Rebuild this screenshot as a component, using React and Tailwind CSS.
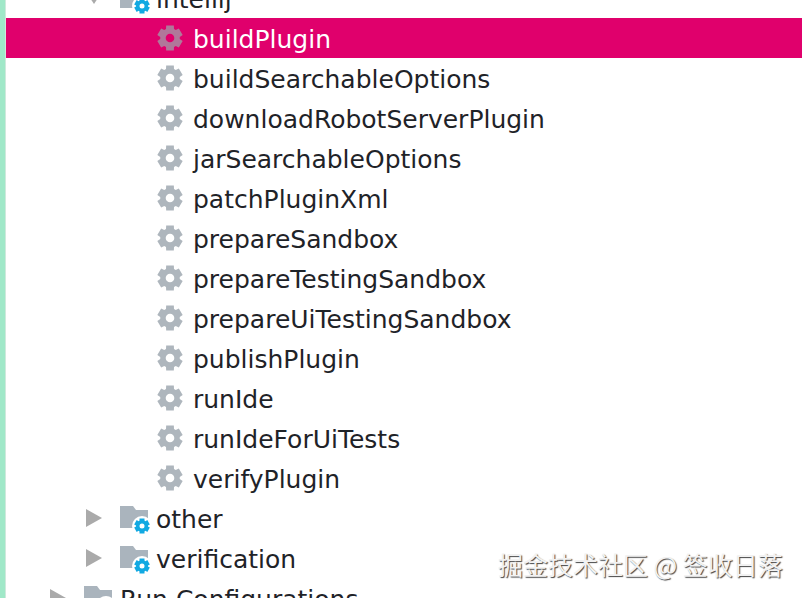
const tasks = ["buildPlugin","buildSearchableOptions","downloadRobotServerPlugin","jarSearchableOptions","patchPluginXml","prepareSandbox","prepareTestingSandbox","prepareUiTestingSandbox","publishPlugin","runIde","runIdeForUiTests","verifyPlugin"];

function gearPath(cx, cy, outer, root, toothHalf, baseHalf) {
  const pts = [];
  for (let i = 0; i < 6; i++) {
    const a = (i * Math.PI) / 3 - Math.PI / 2;
    const p = (r, t) => `${(cx + r * Math.cos(a + t)).toFixed(2)} ${(cy + r * Math.sin(a + t)).toFixed(2)}`;
    pts.push(p(root, -baseHalf), p(outer, -toothHalf), p(outer, toothHalf), p(root, baseHalf));
  }
  return "M" + pts.join("L") + "Z";
}

function Gear({ color = "#aeb6bd", hole = "#fff" }) {
  return (
    <svg width="26" height="26" viewBox="0 0 26 26" className="shrink-0">
      <path fill={color} d={gearPath(13, 13, 13, 9.8, 0.3, 0.42)} />
      <circle cx="13" cy="13" r="4.3" fill={hole} />
    </svg>
  );
}

function Folder() {
  return (
    <span className="relative block h-[24px] w-[30px] shrink-0">
      <svg width="28" height="22" viewBox="0 0 28 22" className="absolute left-0 top-0">
        <path fill="#aab4bd" d="M0 0h13l3 4h12v18H0z" />
      </svg>
      <svg width="20" height="20" viewBox="0 0 20 20" className="absolute left-[12px] top-[10px]">
        <circle cx="10" cy="10" r="10" fill="#fff" />
        <path fill="#12a9e2" d={gearPath(10, 10, 8, 6, 0.32, 0.42)} />
        <circle cx="10" cy="10" r="2.500" fill="#fff" />
      </svg>
    </span>
  );
}

function Arrow({ open }) {
  return open ? (
    <svg width="16" height="12" viewBox="0 0 16 12" className="shrink-0"><path fill="#aaaaaa" d="M0 0h16L8 12z" /></svg>
  ) : (
    <svg width="16" height="18" viewBox="0 0 16 18" className="shrink-0"><path fill="#aaaaaa" d="M0 0l16 9-16 9z" /></svg>
  );
}

function GroupRow({ label, indent, open }) {
  return (
    <div className={`flex h-10 items-center ${indent}`}>
      <span className="flex w-[34px] shrink-0"><Arrow open={open} /></span>
      <Folder />
      <span className="relative top-[1px] ml-[6px] whitespace-nowrap">{label}</span>
    </div>
  );
}

export default function App() {
  return (
    <div className="relative flex h-[598px] w-[802px] overflow-hidden bg-white text-[25px] leading-none text-[#1f2328] [font-family:'DejaVu_Sans',sans-serif]">
      <div className="w-[6px] shrink-0 border-r border-[#cfe9dc] bg-[#a0e8c8]" />
      <div className="-mt-[22px] min-w-0 flex-1">
        <GroupRow label="intellij" indent="pl-[80px]" open />
        {tasks.map((t, i) => (
          <div key={t} className={`flex h-10 items-center gap-[10px] pl-[151px] ${i === 0 ? "bg-[#e0006c] text-white" : ""}`}>
            <Gear color={i === 0 ? "#b0789a" : "#aeb6bd"} hole={i === 0 ? "#e0006c" : "#fff"} />
            <span className="relative top-[1px] whitespace-nowrap">{t}</span>
          </div>
        ))}
        <GroupRow label="other" indent="pl-[80px]" />
        <GroupRow label="verification" indent="pl-[80px]" />
        <GroupRow label="Run Configurations" indent="pl-[44px]" />
      </div>
      <div className="absolute left-[498px] top-[550px] whitespace-nowrap text-[25px] leading-[28px] text-[#f2f2f2] [font-family:'Noto_Sans_CJK_SC',sans-serif] [text-shadow:1px_1px_1px_#444]">
        掘金技术社区 @ 签收日落
      </div>
    </div>
  );
}
